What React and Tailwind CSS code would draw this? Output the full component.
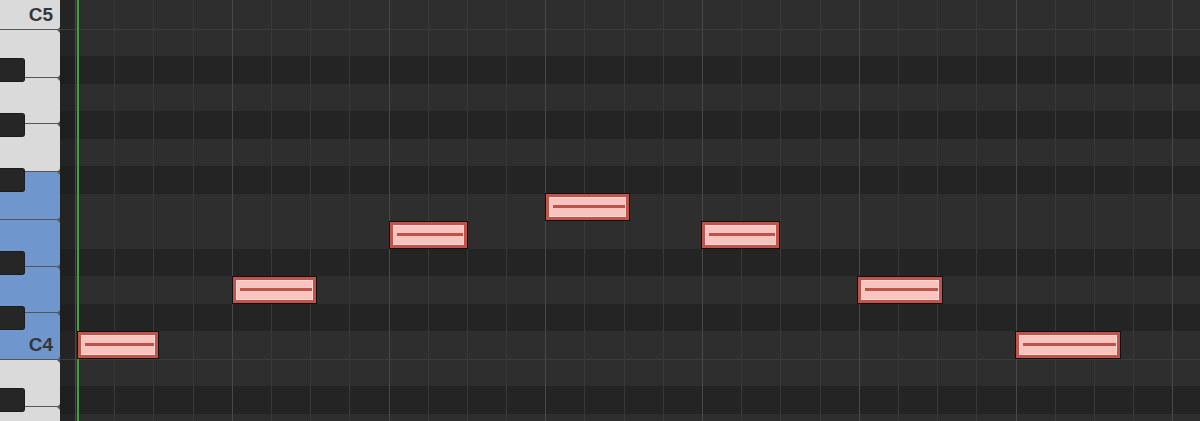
import React from "react";

const whiteKeys = [
  { h: "h-[30px]", label: "C5" },
  { h: "h-[48px]" },
  { h: "h-[46px]" },
  { h: "h-[48px]" },
  { h: "h-[48px]", blue: true },
  { h: "h-[47px]", blue: true },
  { h: "h-[46px]", blue: true },
  { h: "h-[47px]", blue: true, label: "C4" },
  { h: "h-[47px]" },
  { h: "flex-1", last: true },
];

const blackTops = ["top-[58px]", "top-[113px]", "top-[168px]", "top-[251px]", "top-[306px]", "top-[388px]"];

const rows = [
  { n: "C5", black: false, first: true },
  { n: "B4", black: false, octave: true },
  { n: "A#4", black: true },
  { n: "A4", black: false },
  { n: "G#4", black: true },
  { n: "G4", black: false },
  { n: "F#4", black: true },
  { n: "F4", black: false },
  { n: "E4", black: false },
  { n: "D#4", black: true },
  { n: "D4", black: false },
  { n: "C#4", black: true },
  { n: "C4", black: false },
  { n: "B3", black: false, octave: true },
  { n: "A#3", black: true },
  { n: "A3", black: false },
];

const notes = [
  { cls: "left-[2px] top-[331px] w-[82px]" },
  { cls: "left-[157px] top-[276px] w-[85px]" },
  { cls: "left-[314px] top-[221px] w-[79px]" },
  { cls: "left-[470px] top-[193px] w-[85px]" },
  { cls: "left-[626px] top-[221px] w-[79px]" },
  { cls: "left-[782px] top-[276px] w-[86px]" },
  { cls: "left-[940px] top-[331px] w-[106px]" },
];

function Keyboard() {
  return (
    <div className="relative w-[60px] shrink-0 h-full flex flex-col overflow-hidden">
      {whiteKeys.map((k, i) => (
        <div
          key={i}
          className={`relative ${k.h} shrink-0 ${k.blue ? "bg-[#6f97ce]" : "bg-[#dadada]"} ${
            k.last ? "" : "border-b border-[#555555]"
          } flex items-end justify-end pr-[7px] pb-[5px]`}
        >
          {k.label && (
            <span className="font-['Liberation_Sans',Arial,sans-serif] font-bold text-[19px] leading-none text-[#363636]">
              {k.label}
            </span>
          )}
        </div>
      ))}
      {blackTops.map((t, i) => (
        <div
          key={i}
          className={`absolute left-0 ${t} h-[24px] w-[25px] bg-[#262626] rounded-r-[3px] border border-l-0 border-[#1c1c1c]`}
        />
      ))}
      {["top-[26.5px]", "top-[74.5px]", "top-[120.5px]", "top-[168.5px]", "top-[216.5px]", "top-[263.5px]", "top-[309.5px]", "top-[356.5px]", "top-[403.5px]"].map((t, i) => (
        <span
          key={i}
          className={`absolute right-0 ${t} w-0 h-0 border-y-[3.5px] border-y-transparent border-r-[3px] border-r-[#5a5a5a] z-10`}
        />
      ))}
    </div>
  );
}

function Note({ cls }) {
  return (
    <div className={`absolute ${cls} h-[28px] border border-[#111111] bg-[#c0544a] p-[3px]`}>
      <div className="h-full w-full bg-[#f7c4c0] border border-[#fbd8d4] flex flex-col pt-[7px] pl-[3px]">
        <div className="h-[3px] w-full bg-[#bd5348]" />
      </div>
    </div>
  );
}

export default function App() {
  const beats = Array.from({ length: 30 }, (_, i) => i);
  return (
    <div className="flex w-[1200px] h-[421px] overflow-hidden bg-[#2b2b2b]">
      <Keyboard />
      <div className="relative flex-1 h-full overflow-hidden">
        <div className="flex flex-col">
          {rows.map((r) => (
            <div
              key={r.n}
              className={`flex shrink-0 ${r.first ? "h-[28.5px]" : "h-[27.5px]"} ${
                r.octave ? "border-t border-[#3c3c3c]" : ""
              }`}
            >
              <div className={`w-[15px] shrink-0 ${r.black ? "bg-[#1f1f1f]" : "bg-[#242424]"}`} />
              <div className={`flex-1 ${r.black ? "bg-[#242424]" : "bg-[#2e2e2e]"}`} />
            </div>
          ))}
        </div>
        <div className="absolute inset-y-0 left-[15px] right-0 flex pointer-events-none">
          {beats.map((b) => (
            <div
              key={b}
              className={`w-[39.2px] shrink-0 h-full border-l ${
                b % 4 === 0 ? "border-[#484848]" : "border-[#383838]"
              }`}
            />
          ))}
        </div>
        <div className="absolute top-0 bottom-0 left-[17px] w-[1.5px] bg-[#3fa23a]" />
        <div className="absolute inset-y-0 left-[15px] right-0">
          {notes.map((n, i) => (
            <Note key={i} cls={n.cls} />
          ))}
        </div>
      </div>
    </div>
  );
}
